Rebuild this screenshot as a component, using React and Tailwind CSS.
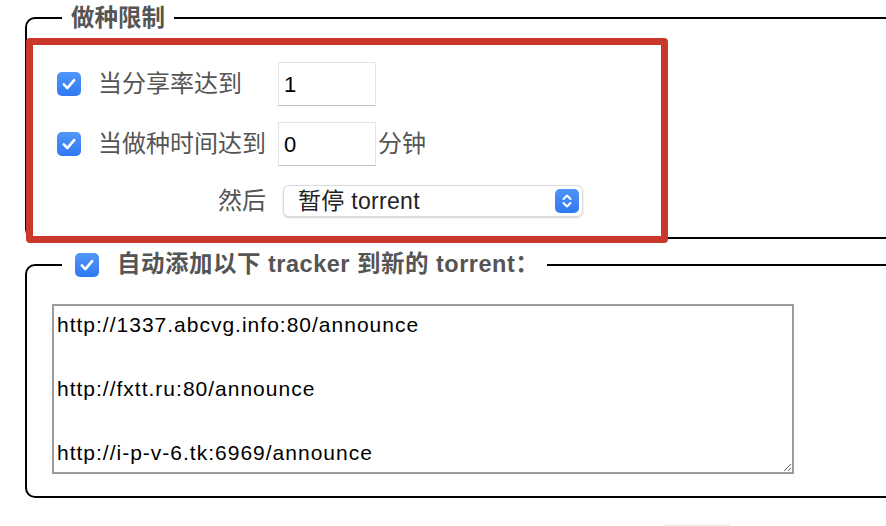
import React from 'react';

function CheckBox() {
  return (
    <span className="flex-none w-[24px] h-[24px] rounded-[5px] bg-gradient-to-b from-[#5196f8] to-[#2f78f3] flex items-center justify-center">
      <svg width="18" height="18" viewBox="0 0 16 16" fill="none">
        <path d="M3.4 8.4 L6.5 11.6 L12.6 4.5" stroke="white" strokeWidth="2.3" strokeLinecap="round" strokeLinejoin="round" />
      </svg>
    </span>
  );
}

function NumberBox({ value }) {
  return (
    <div className="flex-none w-[98px] h-[44px] bg-white border border-[#e4e4e4] border-b-[#c2c2c2] flex items-center pl-[5px] text-[22px] text-black">
      {value}
    </div>
  );
}

const trackers = [
  'http://1337.abcvg.info:80/announce',
  '',
  'http://fxtt.ru:80/announce',
  '',
  'http://i-p-v-6.tk:6969/announce',
].join('\n');

export default function App() {
  return (
    <div className="relative w-[886px] h-[526px] overflow-hidden bg-white pl-[25px] pt-[2px] font-['Liberation_Sans','Noto_Sans_CJK_SC',sans-serif] text-[#555]">
      <fieldset className="w-[900px] border-2 border-black rounded-[10px] pl-[30px] pt-[28px] pb-[20px]">
        <legend className="ml-[5px] px-[9px] h-[32px] leading-[32px] text-[23.5px] font-bold text-[#555]">做种限制</legend>

        <div className="flex items-center h-[44px]">
          <CheckBox />
          <span className="ml-[17px] w-[163px] whitespace-nowrap text-[24px] leading-none">当分享率达到</span>
          <span className="ml-[17px]"><NumberBox value="1" /></span>
        </div>

        <div className="flex items-center h-[44px] mt-[16px]">
          <CheckBox />
          <span className="ml-[17px] w-[163px] whitespace-nowrap text-[24px] leading-none">当做种时间达到</span>
          <span className="ml-[17px]"><NumberBox value="0" /></span>
          <span className="ml-[2px] text-[24px] leading-none">分钟</span>
        </div>

        <div className="flex items-center h-[32px] mt-[19px] pl-[161px]">
          <span className="text-[24px] leading-none whitespace-nowrap">然后</span>
          <div className="ml-[17px] w-[300px] h-[32px] rounded-[6px] bg-white border border-[#dcdcdc] shadow-[0_1px_2px_rgba(0,0,0,0.18)] flex items-center justify-between pl-[14px] pr-[3px]">
            <span className="text-[23px] text-[#222] leading-none tracking-[0.3px]">暂停 torrent</span>
            <span className="w-[24px] h-[24px] rounded-[5px] bg-gradient-to-b from-[#4f94f8] to-[#2f78f3] flex items-center justify-center">
              <svg width="14" height="18" viewBox="0 0 14 18" fill="none">
                <path d="M3.5 7 L7 3.5 L10.5 7" stroke="white" strokeWidth="2" strokeLinecap="round" strokeLinejoin="round" />
                <path d="M3.5 11 L7 14.5 L10.5 11" stroke="white" strokeWidth="2" strokeLinecap="round" strokeLinejoin="round" />
              </svg>
            </span>
          </div>
        </div>
      </fieldset>

      <fieldset className="mt-[10px] w-[900px] border-2 border-black rounded-[10px] pl-[25px] pt-[23px] pb-[22px]">
        <legend className="ml-[10px] pl-[13px] pr-[8px] h-[32px]">
          <span className="flex items-center h-[32px]">
            <CheckBox />
            <span className="ml-[18px] text-[23.5px] font-bold text-[#555] leading-none whitespace-nowrap tracking-[0.5px]">自动添加以下 tracker 到新的 torrent：</span>
          </span>
        </legend>
        <textarea
          readOnly
          defaultValue={trackers}
          className="block w-[742px] h-[170px] border-2 border-[#9b9b9b] bg-white pl-[3px] pt-[3px] text-[21px] leading-[32px] tracking-[1px] text-black outline-none"
        />
      </fieldset>

      <div className="ml-[640px] mt-[26px] w-[65px] h-[2px] bg-[#f2f2f2]" />

      <div className="absolute left-[26px] top-[38px] w-[642px] h-[205px] border-[7px] border-[#c9382a] rounded-[4px]" />
    </div>
  );
}
